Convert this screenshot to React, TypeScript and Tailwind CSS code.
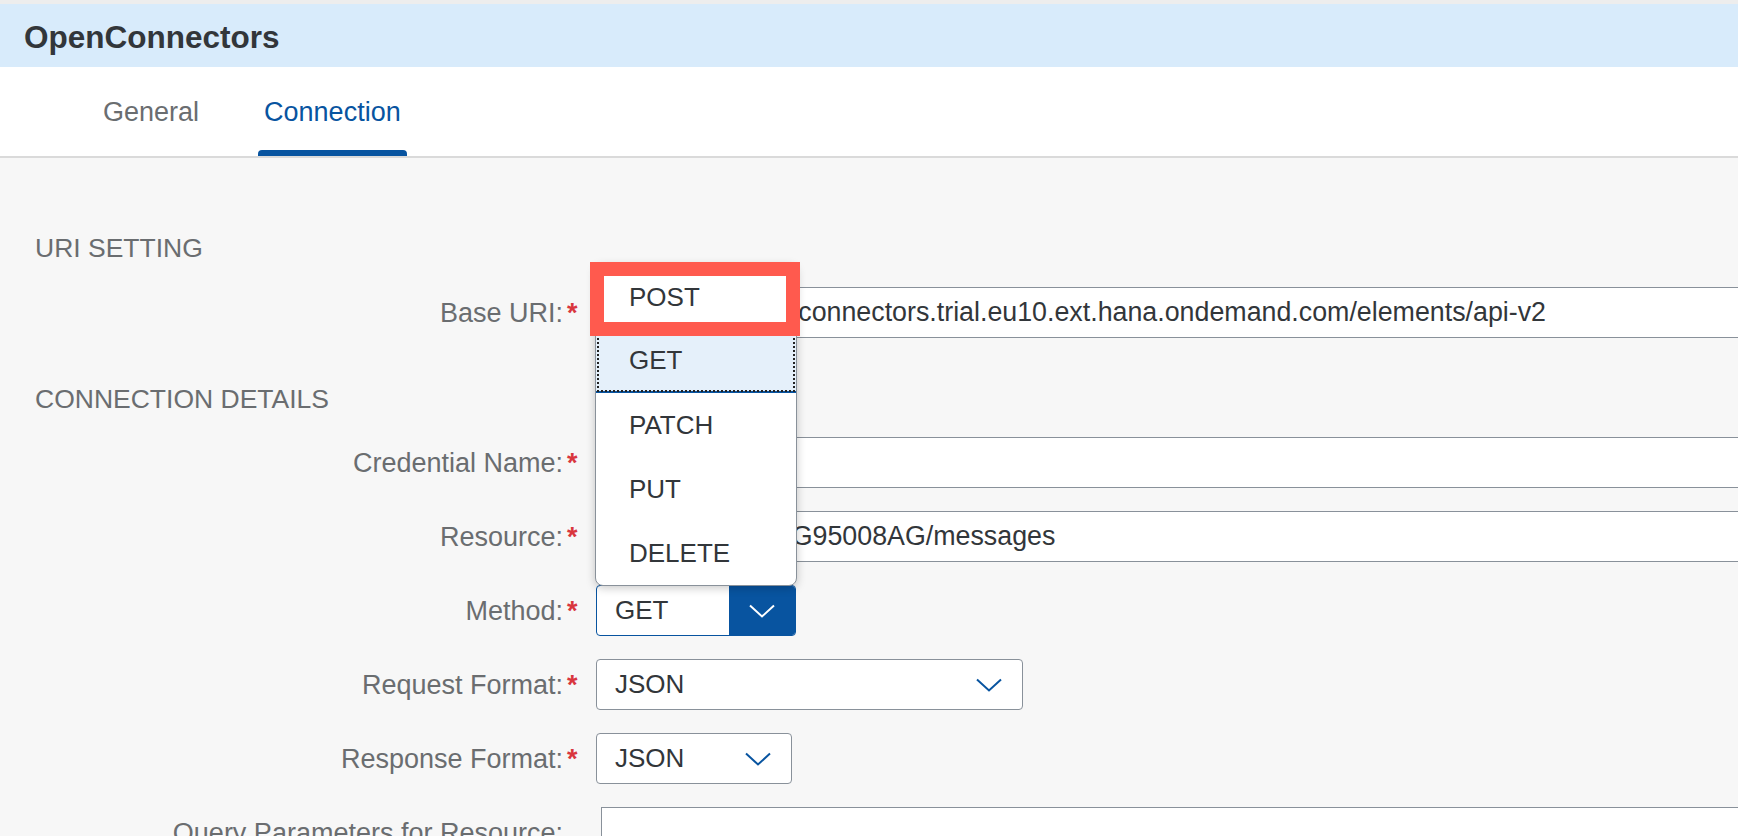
import type { ReactNode } from 'react'

const Chevron = ({ className }: { className?: string }) => (
  <svg viewBox="0 0 26 14" className={className} fill="none" stroke="currentColor" strokeWidth={2}>
    <polyline points="1,1.5 13,12.5 25,1.5" />
  </svg>
)

function Row({ label, required = true, children }: { label: string; required?: boolean; children: ReactNode }) {
  return (
    <div className="flex h-[51px] items-center">
      <div className="flex w-[545px] shrink-0 items-center justify-end text-[27px] leading-[32px] text-[#6a6d70]">
        <span>{label}</span>
        <span className="w-[17px] pl-[4px] font-bold text-[#d9363e]">{required ? '*' : ''}</span>
      </div>
      <div className="ml-[16px] h-full">{children}</div>
    </div>
  )
}

function TextField({ value, className = '' }: { value?: string; className?: string }) {
  return (
    <div
      className={`flex h-full w-[1200px] items-center overflow-hidden whitespace-nowrap border border-[#89919a] bg-white pl-[18px] text-[26.8px] text-[#32363a] ${className}`}
    >
      {value}
    </div>
  )
}

function Select({ value, width }: { value: string; width: string }) {
  return (
    <div className={`flex h-full items-center justify-between rounded-[4px] border border-[#89919a] bg-white pl-[18px] pr-[20px] ${width}`}>
      <span className="text-[26px] text-[#32363a]">{value}</span>
      <Chevron className="h-[14px] w-[26px] text-[#0854a0]" />
    </div>
  )
}

const methods = ['POST', 'GET', 'PATCH', 'PUT', 'DELETE']

export default function App() {
  return (
    <div className="relative flex h-[836px] w-full flex-col overflow-hidden bg-[#f7f7f7] font-['Liberation_Sans',Arial,sans-serif]">
      <div className="h-[4px] shrink-0 bg-[#ededed]" />
      <header className="flex h-[63px] shrink-0 items-center bg-[#d8ebfb] pl-[24px] pt-[5px]">
        <h1 className="text-[31.5px] font-bold leading-none text-[#32363a]">OpenConnectors</h1>
      </header>

      <nav className="flex h-[91px] shrink-0 gap-[53px] border-b-2 border-[#dadada] bg-white pl-[97px]">
        <div className="flex h-full flex-col">
          <div className="flex flex-1 items-center px-[6px] pt-[7px] text-[27px] text-[#6a6d70]">General</div>
          <div className="h-[6px]" />
        </div>
        <div className="flex h-full flex-col">
          <div className="flex flex-1 items-center px-[6px] pt-[7px] text-[27px] text-[#0854a0]">Connection</div>
          <div className="h-[6px] rounded-t-[4px] bg-[#0854a0]" />
        </div>
      </nav>

      <main className="flex-1 pl-[35px] pt-[75px]">
        <h2 className="text-[26.5px] leading-[30px] text-[#6a6d70]">URI SETTING</h2>
        <div className="mt-[24px]">
          <Row label="Base URI:">
            <TextField value="https://api.openconnectors.trial.eu10.ext.hana.ondemand.com/elements/api-v2" />
          </Row>
        </div>

        <h2 className="mt-[46px] text-[26.5px] leading-[30px] text-[#6a6d70]">CONNECTION DETAILS</h2>
        <div className="mt-[23px] flex flex-col gap-[23px]">
          <Row label="Credential Name:">
            <TextField />
          </Row>
          <Row label="Resource:">
            <TextField value="/sfsf/users/PLTG95008AG/messages" />
          </Row>
          <Row label="Method:">
            <div className="flex h-full w-[200px] overflow-hidden rounded-[4px] border border-[#0854a0] bg-white">
              <div className="flex flex-1 items-center pl-[18px] text-[26px] text-[#32363a]">GET</div>
              <div className="flex w-[66px] items-center justify-center bg-[#0854a0] text-white">
                <Chevron className="h-[14px] w-[26px]" />
              </div>
            </div>
          </Row>
          <Row label="Request Format:">
            <Select value="JSON" width="w-[427px]" />
          </Row>
          <Row label="Response Format:">
            <Select value="JSON" width="w-[196px]" />
          </Row>
          <Row label="Query Parameters for Resource:" required={false}>
            <TextField className="ml-[5px]" />
          </Row>
        </div>
      </main>

      {/* open method list */}
      <ul className="absolute left-[595px] top-[264px] w-[202px] overflow-hidden rounded-[8px] border border-[#89919a] bg-white shadow-[0_2px_10px_rgba(0,0,0,0.22)]">
        {methods.map((m) => (
          <li
            key={m}
            className={
              m === 'GET'
                ? 'flex h-[64px] items-center border-b-2 border-[#0854a0] bg-[#e5f0fa] pl-[33px] text-[26px] text-[#32363a] outline-2 outline-dotted outline-[#222] -outline-offset-3'
                : 'flex h-[64px] items-center pl-[33px] text-[26px] text-[#32363a]'
            }
          >
            {m}
          </li>
        ))}
      </ul>

      {/* highlight box */}
      <div className="absolute left-[590px] top-[262px] h-[74px] w-[210px] border-[14px] border-[#ff5a4e]" />
    </div>
  )
}
